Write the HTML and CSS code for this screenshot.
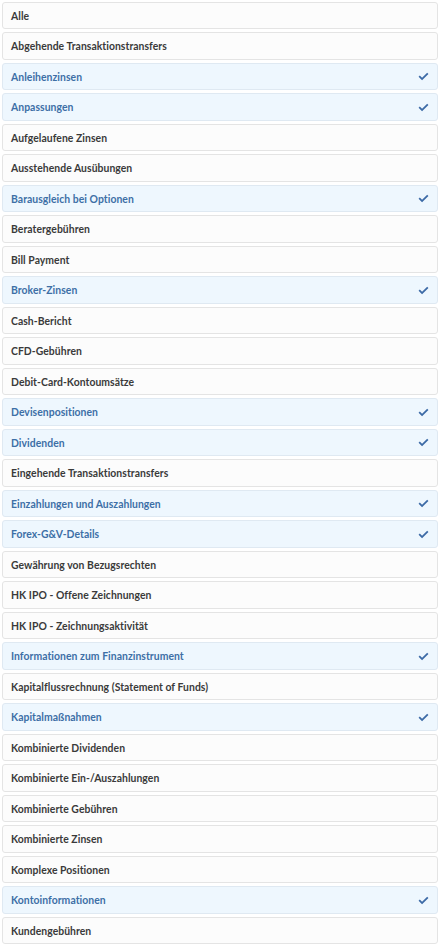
FILE: index.html
```html
<!DOCTYPE html>
<html lang="de">
<head>
<meta charset="utf-8">
<title>Liste</title>
<link rel="stylesheet" href="styles.css">
</head>
<body>
<ul class="list">
  <li class="item">Alle</li>
  <li class="item">Abgehende Transaktionstransfers</li>
  <li class="item sel">Anleihenzinsen<svg class="chk" viewBox="0 0 12 10"><path d="M0.5 5.4 L1.9 4 L4.4 6.4 L10.1 0.7 L11.5 2.1 L4.4 9.2 Z" /></svg></li>
  <li class="item sel">Anpassungen<svg class="chk" viewBox="0 0 12 10"><path d="M0.5 5.4 L1.9 4 L4.4 6.4 L10.1 0.7 L11.5 2.1 L4.4 9.2 Z" /></svg></li>
  <li class="item">Aufgelaufene Zinsen</li>
  <li class="item">Ausstehende Ausübungen</li>
  <li class="item sel">Barausgleich bei Optionen<svg class="chk" viewBox="0 0 12 10"><path d="M0.5 5.4 L1.9 4 L4.4 6.4 L10.1 0.7 L11.5 2.1 L4.4 9.2 Z" /></svg></li>
  <li class="item">Beratergebühren</li>
  <li class="item">Bill Payment</li>
  <li class="item sel">Broker-Zinsen<svg class="chk" viewBox="0 0 12 10"><path d="M0.5 5.4 L1.9 4 L4.4 6.4 L10.1 0.7 L11.5 2.1 L4.4 9.2 Z" /></svg></li>
  <li class="item">Cash-Bericht</li>
  <li class="item">CFD-Gebühren</li>
  <li class="item">Debit-Card-Kontoumsätze</li>
  <li class="item sel">Devisenpositionen<svg class="chk" viewBox="0 0 12 10"><path d="M0.5 5.4 L1.9 4 L4.4 6.4 L10.1 0.7 L11.5 2.1 L4.4 9.2 Z" /></svg></li>
  <li class="item sel">Dividenden<svg class="chk" viewBox="0 0 12 10"><path d="M0.5 5.4 L1.9 4 L4.4 6.4 L10.1 0.7 L11.5 2.1 L4.4 9.2 Z" /></svg></li>
  <li class="item">Eingehende Transaktionstransfers</li>
  <li class="item sel">Einzahlungen und Auszahlungen<svg class="chk" viewBox="0 0 12 10"><path d="M0.5 5.4 L1.9 4 L4.4 6.4 L10.1 0.7 L11.5 2.1 L4.4 9.2 Z" /></svg></li>
  <li class="item sel">Forex-G&amp;V-Details<svg class="chk" viewBox="0 0 12 10"><path d="M0.5 5.4 L1.9 4 L4.4 6.4 L10.1 0.7 L11.5 2.1 L4.4 9.2 Z" /></svg></li>
  <li class="item">Gewährung von Bezugsrechten</li>
  <li class="item">HK IPO - Offene Zeichnungen</li>
  <li class="item">HK IPO - Zeichnungsaktivität</li>
  <li class="item sel">Informationen zum Finanzinstrument<svg class="chk" viewBox="0 0 12 10"><path d="M0.5 5.4 L1.9 4 L4.4 6.4 L10.1 0.7 L11.5 2.1 L4.4 9.2 Z" /></svg></li>
  <li class="item">Kapitalflussrechnung (Statement of Funds)</li>
  <li class="item sel">Kapitalmaßnahmen<svg class="chk" viewBox="0 0 12 10"><path d="M0.5 5.4 L1.9 4 L4.4 6.4 L10.1 0.7 L11.5 2.1 L4.4 9.2 Z" /></svg></li>
  <li class="item">Kombinierte Dividenden</li>
  <li class="item">Kombinierte Ein-/Auszahlungen</li>
  <li class="item">Kombinierte Gebühren</li>
  <li class="item">Kombinierte Zinsen</li>
  <li class="item">Komplexe Positionen</li>
  <li class="item sel">Kontoinformationen<svg class="chk" viewBox="0 0 12 10"><path d="M0.5 5.4 L1.9 4 L4.4 6.4 L10.1 0.7 L11.5 2.1 L4.4 9.2 Z" /></svg></li>
  <li class="item">Kundengebühren</li>
</ul>
</body>
</html>
```
FILE: styles.css
```css
html, body {
  margin: 0;
  padding: 0;
  background: #ffffff;
}
body {
  padding: 1.5px 6px 0 2px;
  font-family: Lato, "Noto Sans", "Liberation Sans", sans-serif;
}
.list {
  list-style: none;
  margin: 0;
  padding: 0;
  display: flex;
  flex-direction: column;
  gap: 3px;
}
.item {
  box-sizing: border-box;
  height: 27.5px;
  display: flex;
  align-items: center;
  justify-content: space-between;
  padding: 1px 8px 0 8px;
  border: 1px solid #e4e4e4;
  border-radius: 3px;
  background: #fcfcfc;
  color: #3a3a3a;
  font-size: 10.4px;
  font-weight: 700;
  letter-spacing: 0.05px;
}
.item.sel {
  background: #eef7fe;
  border-color: #dfe9f2;
  color: #3d6fa6;
}
.chk {
  width: 11px;
  height: 9px;
  fill: #3c6aa6;
}
```
